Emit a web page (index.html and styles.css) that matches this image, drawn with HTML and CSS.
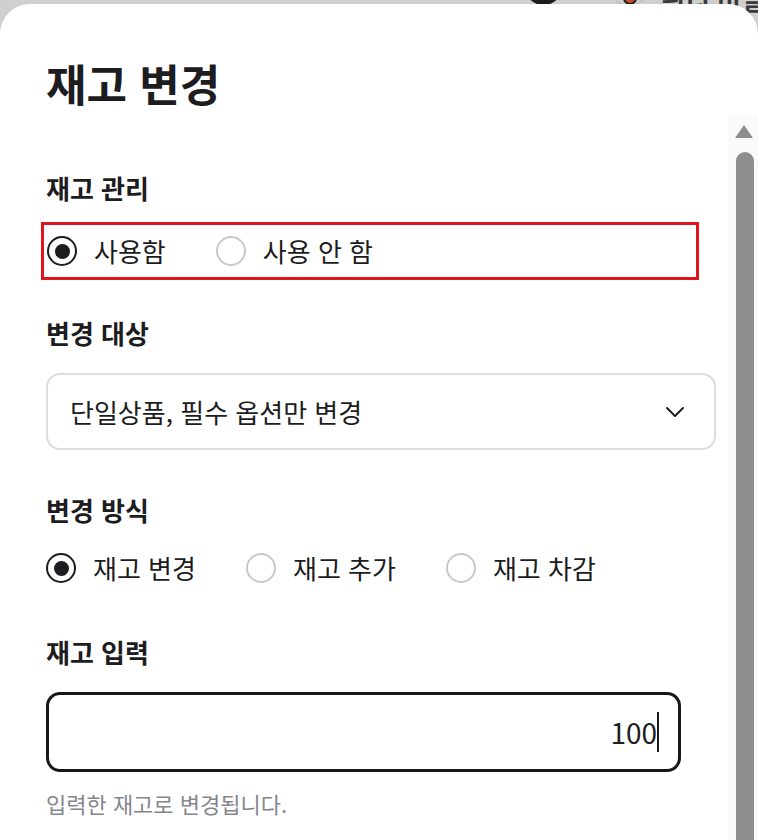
FILE: index.html
```html
<!DOCTYPE html>
<html lang="ko">
<head>
<meta charset="utf-8">
<title>재고 변경</title>
<link rel="stylesheet" href="styles.css">
</head>
<body>
<div class="backdrop">
  <span class="bd-avatar"></span>
  <span class="bd-ring"><span class="bd-dot"></span></span>
  <span class="bd-text">관리 비밀</span>
</div>
<div class="modal">
  <header class="modal-head">
    <h1 class="modal-title">재고 변경</h1>
  </header>
  <div class="modal-body">
    <div class="content">
      <section class="field field-manage">
        <h2 class="field-label">재고 관리</h2>
        <div class="radio-group highlight">
          <label class="radio"><span class="radio-dot checked"></span><span class="radio-text">사용함</span></label>
          <label class="radio"><span class="radio-dot"></span><span class="radio-text">사용 안 함</span></label>
        </div>
      </section>
      <section class="field field-target">
        <h2 class="field-label">변경 대상</h2>
        <div class="select">
          <span class="select-text">단일상품, 필수 옵션만 변경</span>
          <svg class="chevron" width="20" height="12" viewBox="0 0 20 12"><path d="M2 2 L10 10 L18 2" fill="none" stroke="#1c1c21" stroke-width="2" stroke-linecap="round" stroke-linejoin="round"/></svg>
        </div>
      </section>
      <section class="field field-method">
        <h2 class="field-label">변경 방식</h2>
        <div class="radio-group plain">
          <label class="radio"><span class="radio-dot checked"></span><span class="radio-text">재고 변경</span></label>
          <label class="radio"><span class="radio-dot"></span><span class="radio-text">재고 추가</span></label>
          <label class="radio"><span class="radio-dot"></span><span class="radio-text">재고 차감</span></label>
        </div>
      </section>
      <section class="field field-input">
        <h2 class="field-label">재고 입력</h2>
        <div class="text-input"><span class="input-value">100</span><span class="caret"></span></div>
        <p class="helper">입력한 재고로 변경됩니다.</p>
      </section>
    </div>
    <div class="scrollbar">
      <span class="sb-arrow"></span>
      <span class="sb-thumb"></span>
    </div>
  </div>
</div>
</body>
</html>
```
FILE: styles.css
```css
* { box-sizing: border-box; }
html, body { margin: 0; padding: 0; }
body {
  width: 758px;
  height: 840px;
  overflow: hidden;
  background: #cfcfcf;
  font-family: "Noto Sans CJK KR", "Noto Sans", sans-serif;
  color: #1c1c21;
  position: relative;
}
.backdrop {
  height: 40px;
}
.bd-avatar {
  position: absolute;
  left: 525px;
  top: -30px;
  width: 37px;
  height: 35px;
  border-radius: 50%;
  background: #1d1d1f;
}
.bd-ring {
  position: absolute;
  left: 610px;
  top: -30px;
  width: 38px;
  height: 36px;
  border-radius: 50%;
  border: 1px solid #b8b8b8;
}
.bd-dot {
  position: absolute;
  left: 12px;
  top: 20px;
  width: 14px;
  height: 14px;
  border-radius: 50%;
  background: #c4521f;
  border: 2px solid #222;
}
.bd-text {
  position: absolute;
  left: 662px;
  top: -14px;
  font-size: 26px;
  line-height: 26px;
  font-weight: 700;
  color: #3a3a3a;
  white-space: nowrap;
}
.modal {
  position: absolute;
  left: 0;
  top: 4px;
  width: 758px;
  height: 900px;
  background: #fff;
  border-radius: 30px 30px 0 0;
  display: flex;
  flex-direction: column;
}
.modal-head {
  padding: 53px 0 6px 46px;
}
.modal-title {
  margin: 0;
  font-size: 44px;
  line-height: 52px;
  font-weight: 700;
}
.modal-body {
  display: flex;
  flex: 1;
}
.content {
  flex: 1;
  padding-left: 46px;
}
.field-label {
  margin: 0;
  font-size: 26px;
  line-height: 32px;
  font-weight: 700;
}
.field-manage { padding-top: 57px; }
.field-target { padding-top: 37px; }
.field-method { padding-top: 44px; }
.field-input { padding-top: 52px; }

.radio-group {
  display: flex;
  align-items: center;
  gap: 50px;
}
.radio-group.highlight {
  margin-top: 18px;
  margin-left: -5px;
  width: 658px;
  height: 58px;
  border: 3px solid #e3141e;
  padding-left: 3px;
}
.radio-group.plain {
  margin-top: 26px;
  height: 32px;
}
.radio {
  display: flex;
  align-items: center;
  gap: 17px;
}
.radio-dot {
  width: 30px;
  height: 30px;
  border-radius: 50%;
  border: 2px solid #c6c8cd;
  display: flex;
  align-items: center;
  justify-content: center;
}
.radio-dot.checked {
  border: 2.5px solid #1c1c21;
}
.radio-dot.checked::after {
  content: "";
  width: 15px;
  height: 15px;
  border-radius: 50%;
  background: #1c1c21;
}
.radio-text {
  font-size: 26px;
  line-height: 32px;
}
.select {
  margin-top: 24px;
  width: 670px;
  height: 77px;
  border: 2px solid #dcdce1;
  border-radius: 14px;
  display: flex;
  align-items: center;
  justify-content: space-between;
  padding: 0 29px 0 22px;
}
.select-text {
  font-size: 26px;
  line-height: 32px;
}
.text-input {
  margin-top: 24px;
  width: 635px;
  height: 80px;
  border: 3px solid #18181c;
  border-radius: 14px;
  display: flex;
  align-items: center;
  justify-content: flex-end;
  padding-right: 19px;
}
.input-value {
  font-size: 28px;
  line-height: 32px;
}
.caret {
  width: 2px;
  height: 40px;
  background: #18181c;
}
.helper {
  margin: 16px 0 0;
  font-size: 22px;
  line-height: 30px;
  color: #86868d;
}
.scrollbar {
  width: 30px;
  background: #fafafa;
  display: flex;
  flex-direction: column;
  align-items: center;
  padding-top: 10px;
}
.sb-arrow {
  width: 0;
  height: 0;
  border-left: 9px solid transparent;
  border-right: 9px solid transparent;
  border-bottom: 13px solid #8d8d8d;
  margin-left: 2px;
}
.sb-thumb {
  margin-top: 14px;
  width: 18px;
  flex: 1;
  border-radius: 9px 9px 0 0;
  background: #8d8d8d;
  margin-left: 4px;
}
```
